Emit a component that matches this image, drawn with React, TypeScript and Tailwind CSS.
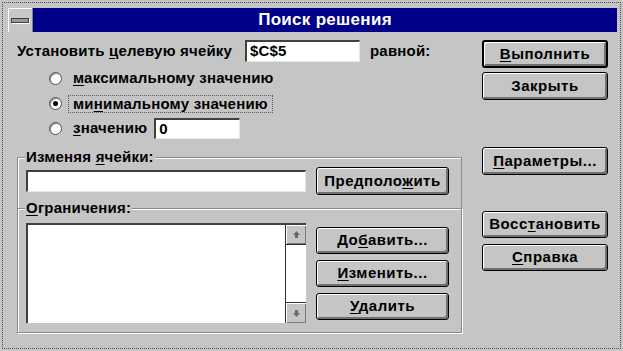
import React from 'react';

const btn =
  'flex items-center justify-center rounded-[3px] border border-black bg-[#c5c5c5] text-[15px] font-bold tracking-[0.5px] text-black shadow-[inset_1px_1px_0_#ffffff,inset_-2px_-2px_0_#707070]';

function U({ children }: { children: React.ReactNode }) {
  return <span className="underline underline-offset-2">{children}</span>;
}

function Button({
  children,
  className = '',
  isDefault = false,
}: {
  children: React.ReactNode;
  className?: string;
  isDefault?: boolean;
}) {
  return (
    <div className={`${btn} ${isDefault ? 'border-2' : ''} ${className}`}>
      <span>{children}</span>
    </div>
  );
}

function Radio({ checked }: { checked?: boolean }) {
  return (
    <div className="flex h-[13px] w-[13px] items-center justify-center rounded-full border border-[#505050] bg-white shadow-[inset_1px_1px_0_#8a8a8a]">
      {checked && <div className="h-[5px] w-[5px] rounded-full bg-black" />}
    </div>
  );
}

const field =
  'bg-white border-t-2 border-l-2 border-[#404040] border-r border-b border-r-[#e6e6e6] border-b-[#e6e6e6] text-[15px] font-bold text-black';

function Arrow({ down }: { down?: boolean }) {
  return (
    <svg width="9" height="9" viewBox="0 0 9 9" className={down ? 'rotate-180' : ''}>
      <path d="M4.5 1 L8 5 L6 5 L6 8 L3 8 L3 5 L1 5 Z" fill="#6a6a6a" />
    </svg>
  );
}

export default function App() {
  return (
    <div className="h-[351px] w-[623px] bg-[#c5c5c5] p-[2px] font-['Liberation_Sans',Arial,sans-serif] text-black">
      <div className="h-full border border-dotted border-[#4a4a4a] pl-[5px] pr-[3px] pt-[5px]">
        {/* title bar */}
        <div className="flex h-[24px]">
          <div className="flex w-[25px] items-center justify-center border-r border-[#808080] bg-[#c8c8c8] shadow-[inset_1px_1px_0_#ffffff]">
            <div className="h-[5px] w-[18px] border border-[#404040] bg-[#9a9a9a] shadow-[1px_1px_0_#ffffff]" />
          </div>
          <div className="flex flex-1 items-center justify-center bg-[#000088] text-[17px] font-bold tracking-[0.3px] text-white">
            Поиск решения
          </div>
        </div>

        <div className="flex pl-[9px] pt-[8px]">
          {/* left column */}
          <div className="w-[445px] text-[15px] font-bold tracking-[0.2px]">
            <div className="flex h-[22px] items-center">
              <span className="w-[228px]">
                Установить <U>ц</U>елевую ячейку
              </span>
              <div className={`${field} flex h-[22px] w-[115px] items-center pl-[3px]`}>$C$5</div>
              <span className="ml-[10px]">равной:</span>
            </div>

            <div className="mt-[4px] pl-[32px]">
              <div className="flex h-[25px] items-center">
                <Radio />
                <span className="ml-[10px] px-[1px]">
                  <U>м</U>аксимальному значению
                </span>
              </div>
              <div className="flex h-[25px] items-center">
                <Radio checked />
                <span className="ml-[6px] border border-dotted border-[#5a5a5a] px-[4px] leading-[16px]">
                  ми<U>н</U>имальному значению
                </span>
              </div>
              <div className="flex h-[25px] items-center">
                <Radio />
                <span className="ml-[10px] px-[1px]">
                  <U>з</U>начению
                </span>
                <div className={`${field} ml-[6px] flex h-[21px] w-[86px] items-center pl-[3px]`}>0</div>
              </div>
            </div>

            {/* group 1 */}
            <div className="relative mt-[16px] h-[51px] border border-b-0 border-[#8a8a8a] shadow-[inset_1px_1px_0_#ffffff] pl-[8px] pt-[9px]">
              <span className="absolute left-[7px] top-[-9px] bg-[#c5c5c5] px-[1px] leading-[16px]">
                Изменяя <U>я</U>чейки:
              </span>
              <div className="flex h-[28px] items-center">
                <div className={`${field} h-[22px] w-[280px]`} />
                <Button className="ml-[10px] h-[28px] w-[133px]">
                  Предполо<U>ж</U>ить
                </Button>
              </div>
            </div>

            {/* group 2 */}
            <div className="relative h-[125px] border border-[#8a8a8a] shadow-[inset_1px_1px_0_#ffffff,1px_1px_0_#ffffff] pl-[8px] pt-[14px]">
              <span className="absolute left-[7px] top-[-9px] bg-[#c5c5c5] px-[1px] leading-[16px]">
                <U>О</U>граничения:
              </span>
              <div className="flex">
                <div className={`${field} flex h-[100px] w-[280px] border-r-0 border-b-0`}>
                  <div className="flex-1" />
                  <div className="flex w-[21px] flex-col border-l border-[#303030]">
                    <div className="flex h-[20px] items-center justify-center border-b border-[#303030] bg-[#c5c5c5] shadow-[inset_1px_1px_0_#ffffff,inset_-1px_-1px_0_#7a7a7a]">
                      <Arrow />
                    </div>
                    <div className="flex-1 bg-white" />
                    <div className="flex h-[21px] items-center justify-center border-t border-[#303030] bg-[#c5c5c5] shadow-[inset_1px_1px_0_#ffffff,inset_-1px_-1px_0_#7a7a7a]">
                      <Arrow down />
                    </div>
                  </div>
                </div>
                <div className="ml-[10px] mt-[4px] flex flex-col gap-[6px]">
                  <Button className="h-[27px] w-[133px]">
                    До<U>б</U>авить...
                  </Button>
                  <Button className="h-[27px] w-[133px]">
                    <U>И</U>зменить...
                  </Button>
                  <Button className="h-[27px] w-[133px]">
                    <U>У</U>далить
                  </Button>
                </div>
              </div>
            </div>
          </div>

          {/* right column */}
          <div className="ml-[20px] flex w-[126px] flex-col">
            <Button isDefault className="h-[28px]">
              <U>В</U>ыполнить
            </Button>
            <Button className="mt-[4px] h-[28px]">Закрыть</Button>
            <Button className="mt-[47px] h-[28px]">
              <U>П</U>араметры...
            </Button>
            <Button className="mt-[36px] h-[27px]">
              Восс<U>т</U>ановить
            </Button>
            <Button className="mt-[6px] h-[27px]">
              <U>С</U>правка
            </Button>
          </div>
        </div>
      </div>
    </div>
  );
}
